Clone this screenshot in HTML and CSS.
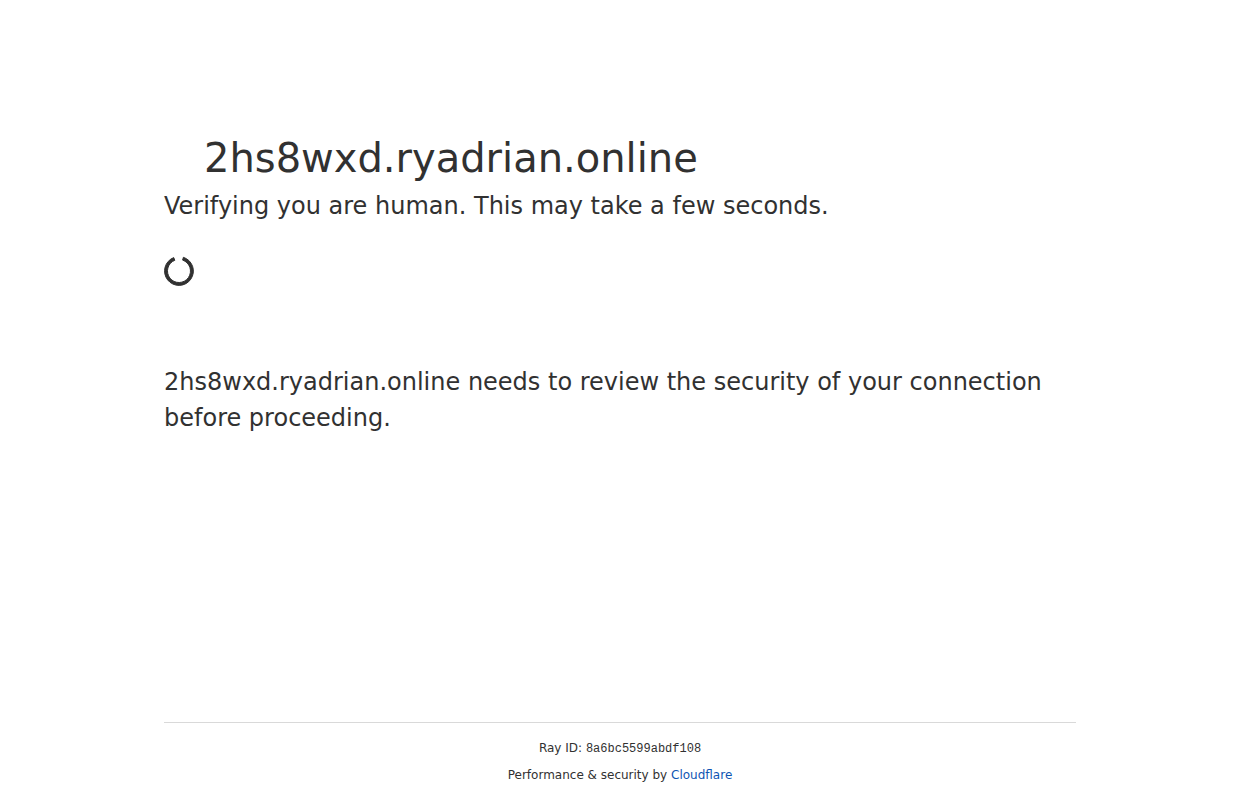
FILE: index.html
```html
<!DOCTYPE html>
<html lang="en">
<head>
    <meta charset="UTF-8">
    <meta name="viewport" content="width=device-width, initial-scale=1.0">
    <title>Just a moment...</title>
    <link rel="stylesheet" href="styles.css">
</head>
<body>

    <main class="main-content">
        <h1 class="site-name">2hs8wxd.ryadrian.online</h1>
        <p class="message">Verifying you are human. This may take a few seconds.</p>
        <div class="spinner">
            <svg width="30" height="30" viewBox="0 0 30 30" aria-hidden="true">
                <path d="M19.4 1.3A14.4 14.4 0 1 1 9.7 1.6L10.8 4.3A11.5 11.5 0 1 0 18.6 4.1Z" fill="#313131" stroke="#313131" stroke-width="1" stroke-linejoin="round"/>
            </svg>
        </div>
        <p class="message">2hs8wxd.ryadrian.online needs to review the security of your connection before proceeding.</p>
    </main>

    <footer class="footer">
        <div class="footer-inner">
            <div class="ray-id">Ray ID: <code>8a6bc5599abdf108</code></div>
            <div>Performance &amp; security by <a href="#">Cloudflare</a></div>
        </div>
    </footer>

</body>
</html>
```
FILE: styles.css
```css
* {
    box-sizing: border-box;
    margin: 0;
    padding: 0;
}

body {
    display: flex;
    flex-direction: column;
    min-height: 100vh;
    font-family: "DejaVu Sans", sans-serif;
    color: #313131;
    background-color: #fff;
}

.main-content,
.footer {
    width: 100%;
    max-width: 960px;
    margin: 0 auto;
    padding: 0 24px;
}

.main-content {
    flex: 1;
    padding-top: 128px;
}

/* Left padding is the room for the site icon */
.site-name {
    padding-left: 40px;
    font-size: 40px;
    font-weight: 500;
    line-height: 60px;
}

.message {
    font-size: 24px;
    font-weight: 500;
    line-height: 36px;
}

/* Loading ring */
.spinner {
    height: 76px;
    margin: 32px 0;
}

.spinner svg {
    display: block;
}

/* Footer */
.footer {
    font-size: 12px;
    line-height: 18px;
    text-align: center;
}

.footer-inner {
    padding: 16px 0;
    border-top: 1px solid #d9d9d9;
}

.ray-id {
    margin-bottom: 8px;
}

code {
    font-family: "Liberation Mono", monospace;
}

a {
    color: #0f55b3;
    text-decoration: none;
}
```
